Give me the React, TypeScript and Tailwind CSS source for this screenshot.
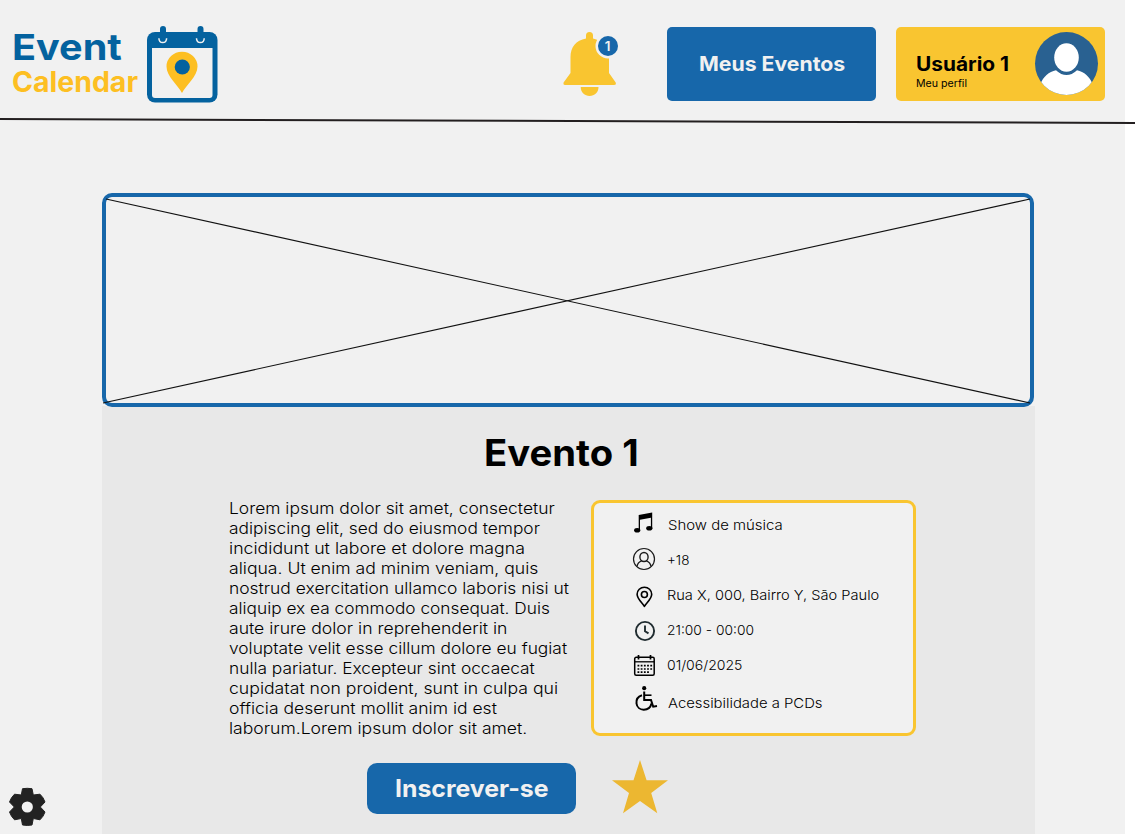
import { useLayoutEffect, useRef, useState } from "react";

type FitProps = { text: string; width: number; className?: string };

// A single line of text stretched horizontally to the given measure.
function Fit({ text, width, className = "" }: FitProps) {
  const ref = useRef<HTMLSpanElement>(null);
  const [scale, setScale] = useState(1);
  useLayoutEffect(() => {
    if (ref.current) setScale(width / ref.current.offsetWidth);
  }, [text, width]);
  return (
    <span className={`block ${className}`} style={{ width }}>
      <span
        ref={ref}
        className="inline-block origin-left whitespace-nowrap align-top"
        style={{ transform: `scaleX(${scale})` }}
      >
        {text}
      </span>
    </span>
  );
}

function LogoIcon() {
  return (
    <svg className="ml-[9px] mt-[25px] h-[78px] w-[72px] shrink-0" viewBox="0 0 72 78">
      <rect x="1" y="7" width="70.5" height="70.5" rx="8" fill="#04629f" />
      <path d="M6 23H66.5V70a3 3 0 0 1-3 3H9a3 3 0 0 1-3-3Z" fill="#f1f1f1" />
      <path d="M17 4V13M54.500 4V13" stroke="#04629f" strokeWidth="6" strokeLinecap="round" />
      <path d="M12.900 13.200C13 19 20.500 19 20.600 13.200M50.500 13.200C50.600 19 58.100 19 58.200 13.200" fill="none" stroke="#f1f1f1" strokeWidth="1.500" />
      <path d="M36 68C32 60 20.500 51.500 20.500 41.500a15.500 14.800 0 0 1 31 0C51.500 51.500 40 60 36 68Z" fill="#fdbf22" />
      <circle cx="36.300" cy="42" r="7.600" fill="#04629f" />
    </svg>
  );
}

function Bell() {
  return (
    <svg className="ml-[345px] mt-[30px] h-[68px] w-[58px] shrink-0" viewBox="0 0 58 68">
      <path
        d="M26.500 2a3.500 3.500 0 0 0-3.500 3.500V8.500C13 10.500 7.500 17 7.500 27V43L.6 52.500Q0 55 2 55H51Q53.500 55 52.700 52.500L46 43V27C46 17 39 10.500 30 8.500V5.500A3.500 3.500 0 0 0 26.500 2Z"
        fill="#f9c530"
      />
      <path d="M17.700 57H35.500C35.500 62.500 31.500 66 26.600 66S17.700 62.500 17.700 57Z" fill="#f9c530" />
      <circle cx="45" cy="16" r="12.500" fill="#f1f1f1" />
      <circle cx="45" cy="16" r="10" fill="#1767aa" />
      <text x="44.500" y="20.800" textAnchor="middle" fontSize="13.500" fontWeight="600" fill="#f1f1f1">1</text>
    </svg>
  );
}

function Avatar() {
  return (
    <svg className="mt-[4px] h-[65px] w-[65px] shrink-0" viewBox="0 0 65 65">
      <defs>
        <clipPath id="face"><circle cx="32.500" cy="32.500" r="31.500" /></clipPath>
      </defs>
      <circle cx="32.500" cy="32.500" r="31.500" fill="#296191" />
      <g clipPath="url(#face)" fill="#fff">
        <ellipse cx="32.500" cy="26.500" rx="12.300" ry="14.300" />
        <path d="M6.500 53C9 46 15 40.500 22 39.200Q32.500 49 43 39.200C50 40.500 56 46 58.500 53V66H6.500Z" />
      </g>
    </svg>
  );
}

function MusicIcon() {
  return (
    <svg className="h-[22px] w-[22px]" viewBox="0 0 22 22">
      <path d="M6.700 3 20.200 .5V16.500H18.900V5.800L8 7.800V18.500H6.700Z" />
      <ellipse cx="5.200" cy="18.300" rx="3.100" ry="2.300" />
      <ellipse cx="17.300" cy="16.300" rx="3.100" ry="2.300" />
    </svg>
  );
}

function PersonIcon() {
  return (
    <svg className="h-[24px] w-[24px]" viewBox="0 0 24 24" fill="none" stroke="#1b1b1b" strokeWidth="1.200">
      <circle cx="12" cy="12" r="10.500" />
      <ellipse cx="12" cy="10" rx="4.100" ry="4.500" strokeWidth="1.400" />
      <path d="M5 19.500C5.500 16.500 7.500 14.500 9.700 13.800M19 19.500C18.500 16.500 16.500 14.500 14.300 13.800" strokeWidth="1.400" />
    </svg>
  );
}

function PinIcon() {
  return (
    <svg className="h-[22px] w-[22px]" viewBox="0 0 22 22" fill="none" stroke="#000" strokeWidth="1.600">
      <path d="M11.400 20.500C9.700 17.200 4.100 13 4.100 8.300a7.300 7.100 0 0 1 14.600 0C18.700 13 13.100 17.200 11.400 20.500Z" strokeLinejoin="round" />
      <circle cx="11.400" cy="8.500" r="3" />
    </svg>
  );
}

function ClockIcon() {
  return (
    <svg className="h-[22px] w-[22px]" viewBox="0 0 22 22" fill="none" stroke="#202c30" strokeWidth="1.900">
      <circle cx="11" cy="11" r="9.100" />
      <path d="M11 5.500V11.200L14.500 13.400" />
    </svg>
  );
}

function CalendarIcon() {
  return (
    <svg className="h-[22px] w-[22px]" viewBox="0 0 22 22" fill="none" stroke="#000">
      <rect x="1.700" y="2.300" width="19.500" height="18" rx="1.500" strokeWidth="1.500" />
      <path d="M1.700 6.800H21" strokeWidth="1.300" />
      <path d="M5.500 0V4.500M17.500 0V4.500" strokeWidth="1.700" />
      <path d="M4.500 10.700H19.500M4.500 14H19.500M4.500 17.200H16.500" strokeWidth="1.700" strokeDasharray="1.800 1.400" />
    </svg>
  );
}

function WheelchairIcon() {
  return (
    <svg className="h-[26px] w-[24px]" viewBox="0 0 24 26" fill="none" stroke="#000" strokeWidth="2">
      <circle cx="10.200" cy="2.200" r="2.100" fill="#000" stroke="none" />
      <path d="M10.200 5.500V14H17L19.200 20.700L23 20" />
      <path d="M10.200 9.200H17.500" strokeWidth="1.600" />
      <path d="M8 9.200C4 10.500 2 13.500 2.500 17.500C3.500 25.500 15.500 26 17.500 17.500" />
    </svg>
  );
}

const bodyLines: [string, number][] = [
  ["Lorem ipsum dolor sit amet, consectetur", 326],
  ["adipiscing elit, sed do eiusmod tempor", 311],
  ["incididunt ut labore et dolore magna", 296],
  ["aliqua. Ut enim ad minim veniam, quis", 309],
  ["nostrud exercitation ullamco laboris nisi ut", 340],
  ["aliquip ex ea commodo consequat. Duis", 321],
  ["aute irure dolor in reprehenderit in", 278],
  ["voluptate velit esse cillum dolore eu fugiat", 338],
  ["nulla pariatur. Excepteur sint occaecat", 306],
  ["cupidatat non proident, sunt in culpa qui", 329],
  ["officia deserunt mollit anim id est", 268],
  ["laborum.Lorem ipsum dolor sit amet.", 298],
];

export default function App() {
  return (
    <div className="h-[834px] w-[1135px] overflow-hidden bg-white font-['Inter','Liberation_Sans',sans-serif] text-black">
      <div className="relative h-[834px] w-[1125px] bg-[#f1f1f1]">
        <header className="flex h-[119px] items-start">
          <div className="ml-[12px] mt-[29px] w-[125px] shrink-0 font-bold">
            <Fit text="Event" width={110} className="h-[38px] text-[36px] leading-[36px] text-[#04629f]" />
            <Fit text="Calendar" width={126} className="h-[30px] text-[28px] leading-[30px] text-[#fdbf22]" />
          </div>
          <LogoIcon />
          <Bell />
          <button className="ml-[46px] mt-[27px] flex h-[74px] w-[209px] shrink-0 justify-center rounded-[5px] bg-[#1767aa] pt-[22px] text-[19.500px] font-bold leading-[30px] text-[#f1f1f1]">
            <Fit text="Meus Eventos" width={146} className="text-left" />
          </button>
          <button className="ml-[20px] mt-[27px] flex h-[74px] w-[209px] shrink-0 rounded-[5px] bg-[#f9c530] pl-[20px] text-left">
            <div className="mt-[22px] w-[118px] shrink-0">
              <Fit text="Usuário 1" width={93} className="text-[19.500px] font-bold leading-[30px]" />
              <Fit text="Meu perfil" width={51} className="text-[10px] leading-[8px]" />
            </div>
            <Avatar />
          </button>
        </header>
        <svg className="pointer-events-none absolute left-0 top-[115px] h-[12px] w-[1135px]" viewBox="0 0 1135 12">
          <path d="M0 4 1135 8" stroke="#231f20" strokeWidth="2" />
        </svg>

        <main className="ml-[102px] mt-[74px] w-[933px]">
          <div className="relative z-10 h-[214px] w-[932px] rounded-[10px] border-4 border-[#1767aa] bg-[#f1f1f1]">
            <svg className="-ml-[4px] -mt-[4px] h-[214px] w-[932px]" viewBox="0 0 932 214">
              <path d="M4 6 928 210M1 210 928 6" stroke="#111" strokeWidth="1.100" />
            </svg>
          </div>
          <section className="-mt-[1px] h-[428px] bg-[#e8e8e8] pt-[23px]">
            <h1 className="ml-[382px] font-bold">
              <Fit text="Evento 1" width={155} className="text-[36.500px] leading-[48px]" />
            </h1>
            <div className="mt-[21px] flex">
              <div className="ml-[127px] mt-px w-[362px] text-[15.500px] font-light leading-[20px]">
                {bodyLines.map(([text, width]) => (
                  <Fit key={text} text={text} width={width} className="h-[20px]" />
                ))}
              </div>
              <div className="mt-[2px] h-[236px] w-[325px] rounded-[9px] border-3 border-[#f9c530] bg-[#f1f1f1] pl-[38px] pt-[5px] text-[13.500px] font-light leading-[20px]">
                <div className="flex h-[38px] items-start gap-[14px] pt-[4px]">
                  <MusicIcon />
                  <Fit text="Show de música" width={115} className="pt-[3px]" />
                </div>
                <div className="flex h-[38px] items-start gap-[11px] pt-[1px]">
                  <PersonIcon />
                  <Fit text="+18" width={22} className="pt-[3px]" />
                </div>
                <div className="flex h-[36px] items-start gap-[12px] pl-px pt-[2px]">
                  <PinIcon />
                  <Fit text="Rua X, 000, Bairro Y, São Paulo" width={212} className="-mt-px" />
                </div>
                <div className="flex h-[34px] items-start gap-[11px] pl-[2px]">
                  <ClockIcon />
                  <Fit text="21:00 - 00:00" width={87} />
                </div>
                <div className="flex h-[32px] items-start gap-[12px] pl-px pt-px">
                  <CalendarIcon />
                  <Fit text="01/06/2025" width={75} />
                </div>
                <div className="flex items-start gap-[10px] pl-[2px]">
                  <WheelchairIcon />
                  <Fit text="Acessibilidade a PCDs" width={155} className="pt-[7px]" />
                </div>
              </div>
            </div>
            <div className="ml-[265px] mt-[23px] flex items-start">
              <button className="mt-[1px] flex h-[51px] w-[209px] justify-center rounded-[10px] bg-[#1767aa] pt-[10px] text-[24px] font-bold leading-[32px] text-[#f1f1f1]">
                <Fit text="Inscrever-se" width={153} className="text-left" />
              </button>
              <svg className="ml-[36px] -mt-[2px] h-[54px] w-[56px]" viewBox="0 0 56 54">
                <path d="M28 0 34.600 20.200H56L39.200 33 45.300 53.200 28 41 11 53.200 17 33 0 20.200H21.500Z" fill="#ecb731" />
              </svg>
            </div>
          </section>
        </main>

        <svg className="absolute left-[8px] top-[787px] h-[40px] w-[39px]" viewBox="0 0 39 40">
          <path
            d="M14.500 1.700Q19.300 .9 24 1.700L25.300 8 32 7.200Q35.500 10.500 37 15L32.300 20 37 25Q35.500 29.500 32 32.800L25.300 31.500 24 38Q19.300 38.900 14.500 38L13.300 31.500 6.500 32.800Q3 29.500 1.500 25L6.300 20 1.500 15Q3 10.500 6.500 7.200L13.300 8Z"
            fill="#222"
            stroke="#222"
            strokeLinejoin="round"
          />
          <circle cx="19.300" cy="20" r="5.600" fill="#f1f1f1" />
        </svg>
      </div>
    </div>
  );
}
